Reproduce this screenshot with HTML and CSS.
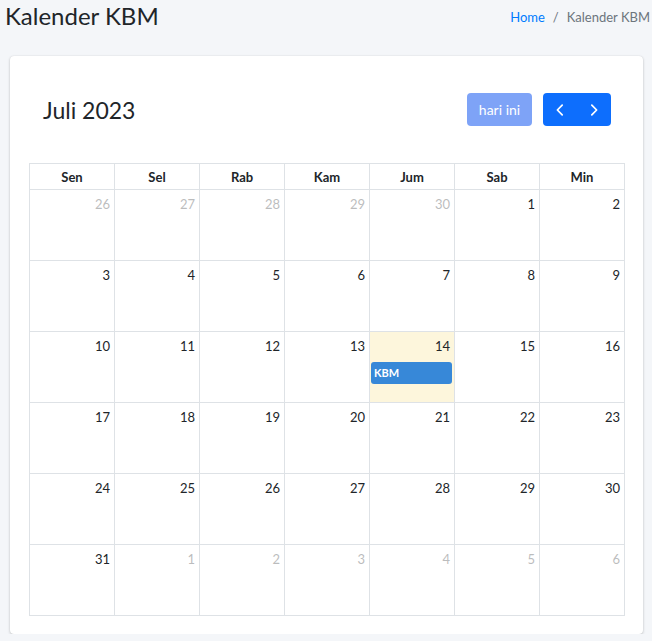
FILE: index.html
```html
<!DOCTYPE html>
<html lang="id">
<head>
    <meta charset="UTF-8">
    <meta name="viewport" content="width=device-width, initial-scale=1.0">
    <title>Kalender KBM</title>
    <link rel="stylesheet" href="styles.css">
</head>
<body>
    <div class="content-header">
        <h1>Kalender KBM</h1>
        <ol class="breadcrumb">
            <li><a href="#">Home</a></li>
            <li class="active">Kalender KBM</li>
        </ol>
    </div>

    <div class="content">
        <div class="card">
            <div class="card-body">
                <div class="toolbar">
                    <h2 class="cal-title">Juli 2023</h2>
                    <div class="toolbar-right">
                        <button class="btn btn-today" disabled>hari ini</button>
                        <div class="btn-group">
                            <button class="btn btn-nav" aria-label="prev">
                                <svg width="14" height="14" viewBox="0 0 16 16"><path d="M10.5 2.5 5 8l5.5 5.5" fill="none" stroke="#fff" stroke-width="2" stroke-linecap="round" stroke-linejoin="round"/></svg>
                            </button>
                            <button class="btn btn-nav" aria-label="next">
                                <svg width="14" height="14" viewBox="0 0 16 16"><path d="M5.5 2.5 11 8l-5.5 5.5" fill="none" stroke="#fff" stroke-width="2" stroke-linecap="round" stroke-linejoin="round"/></svg>
                            </button>
                        </div>
                    </div>
                </div>

                <table class="calendar">
                    <thead>
                        <tr>
                            <th>Sen</th><th>Sel</th><th>Rab</th><th>Kam</th><th>Jum</th><th>Sab</th><th>Min</th>
                        </tr>
                    </thead>
                    <tbody id="cal-body"></tbody>
                </table>
            </div>
        </div>
    </div>

    <script>
        const calBody = document.getElementById('cal-body');
        // Juli 2023 mulai hari Sabtu, grid dimulai Senin 26 Juni
        const days = [];
        for (let d = 26; d <= 30; d++) days.push({ n: d, other: true });
        for (let d = 1; d <= 31; d++) days.push({ n: d });
        for (let d = 1; d <= 6; d++) days.push({ n: d, other: true });

        for (let w = 0; w < 6; w++) {
            const tr = document.createElement('tr');
            for (let i = 0; i < 7; i++) {
                const day = days[w * 7 + i];
                const td = document.createElement('td');
                if (day.other) td.classList.add('other');
                if (!day.other && day.n === 14) td.classList.add('today');
                td.innerHTML = '<div class="day-num">' + day.n + '</div>';
                if (!day.other && day.n === 14) {
                    td.innerHTML += '<div class="event">KBM</div>';
                }
                tr.appendChild(td);
            }
            calBody.appendChild(tr);
        }
    </script>
</body>
</html>
```

FILE: styles.css
```css
body {
    margin: 0;
    background-color: #f4f6f9;
    font-family: "Lato", "Open Sans", sans-serif;
    color: #212529;
}
.content-header {
    display: flex;
    justify-content: space-between;
    align-items: flex-start;
    padding: 2px 2px 0 5px;
    height: 56px;
    box-sizing: border-box;
}
.content-header h1 {
    margin: 0;
    font-size: 24px;
    font-weight: 400;
    line-height: 1.2;
}
.breadcrumb {
    display: flex;
    list-style: none;
    margin: 7px 0 0;
    padding: 0;
    font-size: 13px;
    color: #6c757d;
}
.breadcrumb a {
    color: #007bff;
    text-decoration: none;
}
.breadcrumb li + li::before {
    content: "/";
    padding: 0 8px;
    color: #6c757d;
}
.content {
    padding: 0 9px 0 10px;
}
.card {
    background-color: #fff;
    border-radius: 4px;
    box-shadow: 0 0 1px rgba(0, 0, 0, .125), 0 1px 3px rgba(0, 0, 0, .2);
}
.card-body {
    padding: 19px 18px 18px 19px;
}
.toolbar {
    display: flex;
    justify-content: space-between;
    align-items: center;
    padding: 18px 14px;
    margin-bottom: 19px;
}
.cal-title {
    margin: 0;
    font-size: 23px;
    font-weight: 400;
}
.toolbar-right {
    display: flex;
    gap: 11px;
}
.btn {
    border: none;
    color: #fff;
    font-family: inherit;
    font-size: 14px;
    height: 33px;
    border-radius: 4px;
    cursor: pointer;
    padding: 0 12px;
    white-space: nowrap;
}
.btn-today {
    background-color: #7ea3f7;
    width: 65px;
    padding: 0;
    cursor: default;
}
.btn-group {
    display: flex;
}
.btn-nav {
    background-color: #0d6efd;
    width: 34px;
    display: flex;
    align-items: center;
    justify-content: center;
    padding: 0;
}
.btn-group .btn-nav:first-child {
    border-radius: 4px 0 0 4px;
}
.btn-group .btn-nav:last-child {
    border-radius: 0 4px 4px 0;
}
.calendar {
    width: 100%;
    border-collapse: collapse;
    table-layout: fixed;
    font-size: 13px;
}
.calendar th,
.calendar td {
    border: 1px solid #dee2e6;
    padding: 0;
}
.calendar th {
    height: 25px;
    font-weight: 700;
    text-align: center;
}
.calendar td {
    height: 70px;
    vertical-align: top;
}
.day-num {
    text-align: right;
    padding: 4px 4px 0;
    line-height: 21px;
}
.other .day-num {
    opacity: .3;
}
.today {
    background-color: #fdf6dc;
}
.event {
    margin: 5px 2px 0 1px;
    height: 22px;
    line-height: 22px;
    padding: 0 3px;
    border-radius: 3px;
    background-color: #3788d8;
    color: #fff;
    font-size: 11px;
    font-weight: 700;
}
```
